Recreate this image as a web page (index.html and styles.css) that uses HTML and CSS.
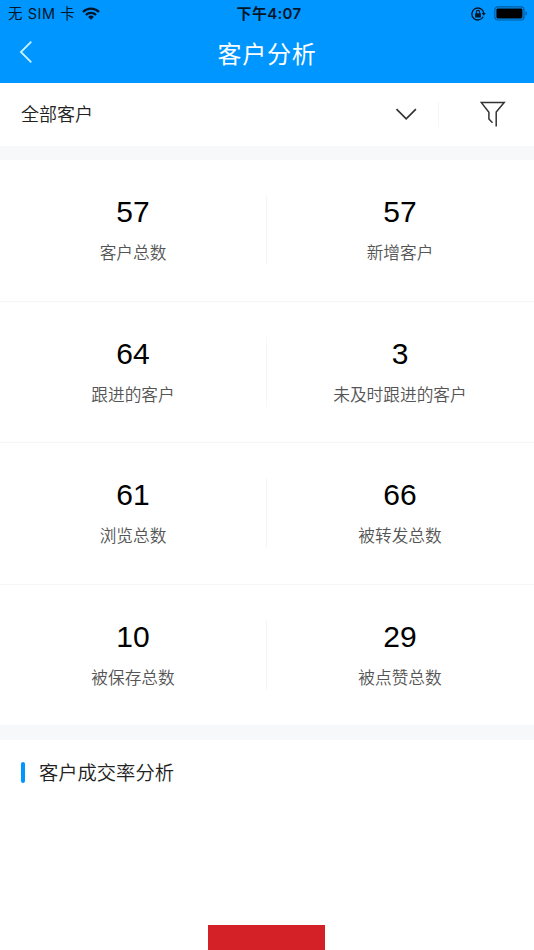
FILE: index.html
```html
<!DOCTYPE html>
<html lang="zh-CN">
<head>
    <meta charset="UTF-8">
    <meta name="viewport" content="width=device-width, initial-scale=1.0">
    <title>客户分析</title>
    <link rel="stylesheet" href="styles.css">
</head>
<body>
    <header class="header">
        <div class="status-bar">
            <div class="status-left">
                <span>无 SIM 卡</span>
                <svg class="icon-wifi" width="18" height="13" viewBox="0 0 18 13" fill="none" stroke="#001629" stroke-width="2.3">
                    <path d="M1 5a11.3 11.3 0 0 1 16 0"/>
                    <path d="M3.9 8a7.2 7.2 0 0 1 10.2 0"/>
                    <path d="M9 12.8L6.1 9.9a4.1 4.1 0 0 1 5.8 0z" fill="#001629" stroke="none"/>
                </svg>
            </div>
            <div class="status-time">下午4:07</div>
            <div class="status-right">
                <svg width="15" height="14" viewBox="0 0 15 14" fill="none" stroke="#001629">
                    <path d="M12.2 9.8A6 6 0 1 1 12.8 6" stroke-width="1.3"/>
                    <path d="M10.6 5.9h4.2l-2.1 2.8z" fill="#001629" stroke="none"/>
                    <rect x="4.1" y="6.3" width="5.8" height="4.2" rx=".5" fill="#001629" stroke="none"/>
                    <path d="M5.4 6.5V5a1.6 1.6 0 0 1 3.2 0v1.5" stroke-width="1.1"/>
                </svg>
                <svg width="34" height="15" viewBox="0 0 34 15">
                    <rect x=".8" y=".8" width="29.2" height="13.2" rx="3" fill="none" stroke="#005b9c" stroke-width="1.2"/>
                    <rect x="2.4" y="2.4" width="26" height="10" rx="1.4" fill="#000"/>
                    <path d="M31.5 5.2c2 .6 2 3.8 0 4.4z" fill="#005b9c"/>
                </svg>
            </div>
        </div>
        <div class="nav-bar">
            <svg class="icon-back" width="14" height="24" viewBox="0 0 14 24" fill="none" stroke="#c5f3ff" stroke-width="1.8">
                <path d="M12.3 1.6L1.9 12l10.4 10.4"/>
            </svg>
            <h1>客户分析</h1>
        </div>
    </header>

    <div class="filter-bar">
        <span class="filter-name">全部客户</span>
        <svg class="icon-down" width="22" height="14" viewBox="0 0 22 14" fill="none" stroke="#333" stroke-width="1.7">
            <path d="M1.5 1.1l9.7 9.7L20.9 1.1"/>
        </svg>
        <span class="filter-line"></span>
        <svg class="icon-filter" width="26" height="28" viewBox="0 0 26 28" fill="none" stroke="#333" stroke-width="1.5">
            <path d="M12.5 21.8L8.9 18v-6.8L1.2 1.4h23L16.2 11v14.5"/>
        </svg>
    </div>

    <main class="stats">
        <div class="stats-row">
            <div class="stat"><strong>57</strong><span>客户总数</span></div>
            <div class="stat"><strong>57</strong><span>新增客户</span></div>
        </div>
        <div class="stats-row">
            <div class="stat"><strong>64</strong><span>跟进的客户</span></div>
            <div class="stat"><strong>3</strong><span>未及时跟进的客户</span></div>
        </div>
        <div class="stats-row">
            <div class="stat"><strong>61</strong><span>浏览总数</span></div>
            <div class="stat"><strong>66</strong><span>被转发总数</span></div>
        </div>
        <div class="stats-row">
            <div class="stat"><strong>10</strong><span>被保存总数</span></div>
            <div class="stat"><strong>29</strong><span>被点赞总数</span></div>
        </div>
    </main>

    <section class="analysis">
        <h2>客户成交率分析</h2>
        <div class="funnel-bar"></div>
    </section>
</body>
</html>
```
FILE: styles.css
```css
:root {
    --blue: #0096ff;
    --gap-bg: #f7f8fa;
    --line: #f6f6f6;
}
* { box-sizing: border-box; margin: 0; padding: 0; }
body {
    height: 950px;
    display: flex;
    flex-direction: column;
    overflow: hidden;
    background: #fff;
    color: #222;
    font-family: "Liberation Sans", "Noto Sans CJK SC", sans-serif;
    font-weight: 350;
}
svg { display: block; flex: none; }

.header { height: 83px; background: var(--blue); }
.status-bar {
    display: grid; grid-template-columns: 1fr auto 1fr; align-items: center;
    height: 27px; padding: 0 6px 0 8px;
    color: #001629; font-family: Inter, "Noto Sans CJK SC", sans-serif;
    font-size: 14.4px; line-height: 27px;
}
.status-left { display: flex; align-items: center; gap: 7px; font-weight: 400; letter-spacing: .6px; }
.status-time { padding-left: 2px; font-weight: 600; font-size: 15px; letter-spacing: .3px; }
.status-right { display: flex; align-items: center; justify-content: flex-end; gap: 8px; }
.nav-bar {
    display: grid; grid-template-columns: 1fr auto 1fr; align-items: center;
    height: 56px; padding: 0 19px;
}
.icon-back { margin-top: -7px; }
.nav-bar h1 {
    color: #fff; font-size: 24px; font-weight: 400; line-height: 36px;
    letter-spacing: .7px; margin-top: -1px;
}

.filter-bar {
    display: flex; align-items: center;
    height: 63px; padding: 0 28px 0 21px;
}
.filter-name { flex: 1; font-size: 18px; line-height: 26px; }
.filter-line { width: 1px; height: 25px; margin: 0 41px 0 21px; background: var(--line); }

.stats { border: solid var(--gap-bg); border-width: 14px 0 15px; }
.stats-row { display: flex; height: 141.67px; border-bottom: 1px solid var(--line); }
.stats-row:last-child { border-bottom: none; height: 140px; }
.stat {
    flex: 1; display: flex; flex-direction: column; align-items: center;
    height: 70px; margin-top: 35px;
}
.stat + .stat { padding-right: 1px; border-left: 1px solid var(--line); }
.stat strong { color: #000; font-size: 30px; font-weight: 400; line-height: 34px; }
.stat span { margin-top: 12px; color: #555; font-size: 16.7px; line-height: 26px; }

.analysis { flex: 1; display: flex; flex-direction: column; padding: 17px 21px 0; }
.analysis h2 {
    display: flex; align-items: center; gap: 14px; padding-top: 1px;
    font-size: 19.3px; font-weight: 350; line-height: 31px;
}
.analysis h2::before { content: ""; width: 4px; height: 21px; margin-top: -1px; border-radius: 2px; background: var(--blue); }
.funnel-bar { width: 117px; height: 25px; margin: auto auto 0 187px; background: #d42027; }
```
